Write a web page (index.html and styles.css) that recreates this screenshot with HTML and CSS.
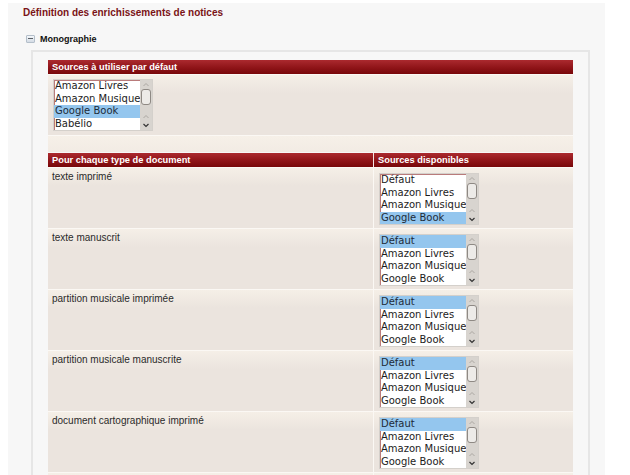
FILE: index.html
```html
<!DOCTYPE html>
<html lang="fr">
<head>
<meta charset="utf-8">
<title>Définition des enrichissements de notices</title>
<link rel="stylesheet" href="styles.css">
</head>
<body>
<svg class="defs" width="0" height="0" aria-hidden="true">
  <symbol id="sb" viewBox="0 0 12 50">
    <rect x="0" y="0" width="12" height="50" fill="#d8d4cf"/>
    <polyline points="3.5,6 6,3.5 8.5,6" fill="none" stroke="#aca8a3" stroke-width="1"/>
    <rect x="1.5" y="9.5" width="9" height="15" rx="2.5" fill="#edebe8" stroke="#8e8984"/>
    <polyline points="3.5,38 6,35.5 8.5,38" fill="none" stroke="#aca8a3" stroke-width="1"/>
    <polyline points="3.5,44 6,46.5 8.5,44" fill="none" stroke="#333" stroke-width="1.2"/>
  </symbol>
</svg>
<div class="panel">
  <h1 class="title">Définition des enrichissements de notices</h1>
  <div class="group-head"><span class="toggle"></span><span class="group-name">Monographie</span></div>
  <div class="group-body">
    <table class="grid">
      <tr><th class="bar" colspan="2">Sources à utiliser par défaut</th></tr>
      <tr><td class="sel-cell first" colspan="2">
        <div class="listbox" role="listbox">
          <div class="options">
            <div class="opt">Amazon Livres</div>
            <div class="opt">Amazon Musique</div>
            <div class="opt selected">Google Book</div>
            <div class="opt">Babélio</div>
          </div>
          <svg class="scroll" width="12" height="50"><use href="#sb"/></svg>
        </div>
      </td></tr>
      <tr><td class="spacer" colspan="2"></td></tr>
    </table>
    <table class="grid types">
      <colgroup><col class="c1"><col class="c2"></colgroup>
      <tr><th class="bar">Pour chaque type de document</th><th class="bar col2">Sources disponibles</th></tr>
      <tr><td class="label">texte imprimé</td><td class="sel-cell col2">
        <div class="listbox" role="listbox">
          <div class="options">
            <div class="opt">Défaut</div>
            <div class="opt">Amazon Livres</div>
            <div class="opt">Amazon Musique</div>
            <div class="opt selected">Google Book</div>
          </div>
          <svg class="scroll" width="12" height="50"><use href="#sb"/></svg>
        </div>
      </td></tr>
      <tr><td class="label">texte manuscrit</td><td class="sel-cell col2">
        <div class="listbox" role="listbox">
          <div class="options">
            <div class="opt selected">Défaut</div>
            <div class="opt">Amazon Livres</div>
            <div class="opt">Amazon Musique</div>
            <div class="opt">Google Book</div>
          </div>
          <svg class="scroll" width="12" height="50"><use href="#sb"/></svg>
        </div>
      </td></tr>
      <tr><td class="label">partition musicale imprimée</td><td class="sel-cell col2">
        <div class="listbox" role="listbox">
          <div class="options">
            <div class="opt selected">Défaut</div>
            <div class="opt">Amazon Livres</div>
            <div class="opt">Amazon Musique</div>
            <div class="opt">Google Book</div>
          </div>
          <svg class="scroll" width="12" height="50"><use href="#sb"/></svg>
        </div>
      </td></tr>
      <tr><td class="label">partition musicale manuscrite</td><td class="sel-cell col2">
        <div class="listbox" role="listbox">
          <div class="options">
            <div class="opt selected">Défaut</div>
            <div class="opt">Amazon Livres</div>
            <div class="opt">Amazon Musique</div>
            <div class="opt">Google Book</div>
          </div>
          <svg class="scroll" width="12" height="50"><use href="#sb"/></svg>
        </div>
      </td></tr>
      <tr><td class="label">document cartographique imprimé</td><td class="sel-cell col2">
        <div class="listbox" role="listbox">
          <div class="options">
            <div class="opt selected">Défaut</div>
            <div class="opt">Amazon Livres</div>
            <div class="opt">Amazon Musique</div>
            <div class="opt">Google Book</div>
          </div>
          <svg class="scroll" width="12" height="50"><use href="#sb"/></svg>
        </div>
      </td></tr>
      <tr><td class="filler"></td><td class="filler col2"></td></tr>
    </table>
  </div>
</div>
</body>
</html>
```

FILE: styles.css
```css
html, body {
  margin: 0;
  padding: 0;
  background: #ffffff;
  overflow: hidden;
}
body {
  font-family: "Liberation Sans", Arial, sans-serif;
  color: #333;
}
.defs {
  position: absolute;
  width: 0;
  height: 0;
}
.panel {
  margin: 3px 25px 0 8px;
  background: #f7f7f7;
  padding: 4px 15px 40px 15px;
  min-height: 500px;
}
.title {
  margin: 0;
  font-size: 10px;
  line-height: 12px;
  font-weight: bold;
  color: #7a1316;
}
.group-head {
  display: flex;
  align-items: center;
  height: 12px;
  margin-top: 14px;
}
.toggle {
  position: relative;
  width: 7px;
  height: 6px;
  border: 1px solid #b4bfca;
  border-radius: 1px;
  background: linear-gradient(#f4f7fa, #d3dbe4);
  margin-left: 3px;
}
.toggle::after {
  content: "";
  position: absolute;
  left: 1px;
  top: 2px;
  width: 5px;
  height: 1px;
  background: #5a5f66;
}
.group-name {
  margin-left: 5px;
  font-size: 9px;
  font-weight: bold;
  color: #111;
}
.group-body {
  margin: 5px 0 0 8px;
  border: 2px solid #e6e6e6;
  border-bottom: none;
  padding: 8px 15px 0 15px;
}
.grid {
  width: 100%;
  border-collapse: separate;
  border-spacing: 0;
  table-layout: fixed;
}
.types {
  margin-top: 1px;
}
.c1 { width: 325px; }
.c2 { width: 200px; }
.bar {
  height: 14px;
  padding: 0 4px;
  text-align: left;
  font-size: 9.3px;
  font-weight: bold;
  line-height: 14px;
  color: #fff;
  background: linear-gradient(#ab2a2f, #8f1418 55%, #780709);
  white-space: nowrap;
  overflow: hidden;
}
.grid td {
  border-top: 1px solid #fbf8f4;
  background: linear-gradient(#f5efe7, #ebe4de 18px, #ebe4de);
  vertical-align: top;
}
.col2 {
  border-left: 1px solid #fbf8f4;
}
.bar.col2 {
  border-left: 1px solid #f3e6e6;
}
.label {
  padding: 3px 4px;
  font-size: 10px;
  line-height: 12px;
  color: #2a2a2a;
}
.sel-cell {
  padding: 5px 5px 3px 5px;
}
.sel-cell.first {
  padding-top: 4px;
  padding-bottom: 4px;
}
.spacer {
  height: 16px;
  padding: 0;
}
.grid td.spacer {
  background: linear-gradient(#f6f0e8, #f2ebe4);
}
.filler {
  height: 30px;
  padding: 0;
}
.listbox {
  display: flex;
  width: 100px;
  height: 52px;
  box-sizing: border-box;
  border: 1px solid #d4d0cb;
  background: #fff;
}
.options {
  flex: 1;
  overflow: hidden;
  box-shadow: inset 1px 1px 0 #b97b7b;
}
.opt {
  height: 12.5px;
  line-height: 12.5px;
  padding-left: 1px;
  font-family: "DejaVu Sans", sans-serif;
  font-size: 10px;
  color: #1c1c1c;
  white-space: nowrap;
}
.opt.selected {
  background: #94c6ee;
  color: #1d2b38;
}
.scroll {
  display: block;
  flex: none;
}
```
